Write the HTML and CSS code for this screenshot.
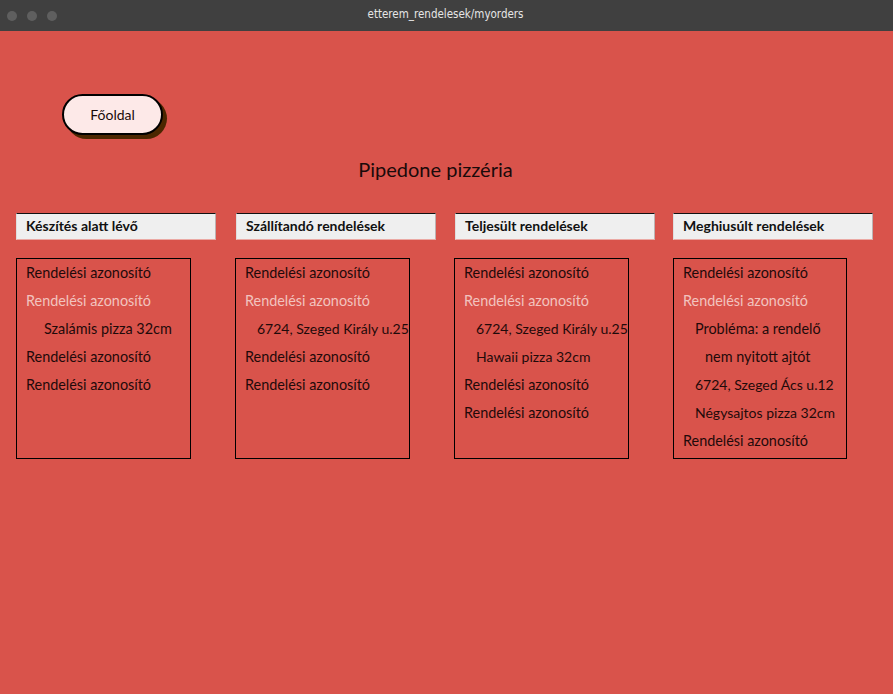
FILE: index.html
```html
<!DOCTYPE html>
<html lang="hu">
<head>
<meta charset="utf-8">
<title>etterem_rendelesek/myorders</title>
<link rel="stylesheet" href="styles.css">
</head>
<body>
<div class="titlebar">
  <div class="dots"><span class="dot"></span><span class="dot"></span><span class="dot"></span></div>
  <div class="title">etterem_rendelesek/myorders</div>
</div>
<main class="page">
  <div class="nav"><button class="home-btn">Főoldal</button></div>
  <h1 class="heading">Pipedone pizzéria</h1>
  <div class="columns">
    <section class="col">
      <div class="col-head">Készítés alatt lévő</div>
      <ul class="orders">
        <li>Rendelési azonosító</li>
        <li class="active">Rendelési azonosító</li>
        <li class="sub sub-wide">Szalámis pizza 32cm</li>
        <li>Rendelési azonosító</li>
        <li>Rendelési azonosító</li>
      </ul>
    </section>
    <section class="col">
      <div class="col-head">Szállítandó rendelések</div>
      <ul class="orders">
        <li>Rendelési azonosító</li>
        <li class="active">Rendelési azonosító</li>
        <li class="sub">6724, Szeged Király u.25</li>
        <li>Rendelési azonosító</li>
        <li>Rendelési azonosító</li>
      </ul>
    </section>
    <section class="col">
      <div class="col-head">Teljesült rendelések</div>
      <ul class="orders">
        <li>Rendelési azonosító</li>
        <li class="active">Rendelési azonosító</li>
        <li class="sub">6724, Szeged Király u.25</li>
        <li class="sub">Hawaii pizza 32cm</li>
        <li>Rendelési azonosító</li>
        <li>Rendelési azonosító</li>
      </ul>
    </section>
    <section class="col">
      <div class="col-head">Meghiusúlt rendelések</div>
      <ul class="orders">
        <li>Rendelési azonosító</li>
        <li class="active">Rendelési azonosító</li>
        <li class="sub problem">Probléma: a rendelő<br>nem nyitott ajtót</li>
        <li class="sub">6724, Szeged Ács u.12</li>
        <li class="sub">Négysajtos pizza 32cm</li>
        <li>Rendelési azonosító</li>
      </ul>
    </section>
  </div>
</main>
</body>
</html>
```

FILE: styles.css
```css
* { box-sizing: border-box; }
html, body { margin: 0; padding: 0; }
body {
  background: #d9534b;
  font-family: "Lato", "Noto Sans", sans-serif;
  color: #1a0a0a;
  height: 694px;
  overflow: hidden;
}
.titlebar {
  height: 31px;
  background: #404040;
  display: flex;
  align-items: center;
  position: relative;
}
.dots {
  display: flex;
  gap: 10px;
  padding-left: 7px;
  padding-top: 1px;
}
.dot {
  width: 10px;
  height: 10px;
  border-radius: 50%;
  background: #5f5f5f;
}
.title {
  position: absolute;
  left: 0;
  right: 0;
  top: 0;
  line-height: 29px;
  text-align: center;
  color: #e6e6e6;
  font-family: "DejaVu Sans Condensed", "DejaVu Sans", sans-serif;
  font-stretch: condensed;
  font-size: 11.5px;
  padding-right: 2px;
}
.page { padding: 63px 0 0 0; }
.nav { padding-left: 62px; height: 45px; }
.home-btn {
  width: 101px;
  height: 41px;
  border: 2px solid #000;
  border-radius: 21px;
  background: #fde9e8;
  box-shadow: 4px 4px 0 #4b2600;
  font-family: inherit;
  font-size: 14px;
  color: #1a0a0a;
  padding: 0;
  cursor: pointer;
}
.heading {
  margin: 15px 0 0;
  font-size: 20px;
  font-weight: 400;
  text-align: center;
  padding-right: 22px;
  line-height: 30px;
  color: #1a0a0a;
}
.columns {
  display: grid;
  grid-template-columns: 220px 219px 218px 219px;
  padding-left: 16px;
  margin-top: 29px;
}
.col-head {
  width: 200px;
  height: 27px;
  background: #efefef;
  border-top: 1px solid #111;
  border-left: 1px solid #dedede;
  border-right: 1px solid #bdb3b3;
  border-bottom: 1px solid #eba9a4;
  font-weight: 700;
  font-size: 14px;
  line-height: 24px;
  padding-left: 9px;
  color: #111;
}
.orders {
  list-style: none;
  margin: 18px 0 0;
  padding: 0 0 0 9px;
  width: 175px;
  height: 201px;
  border: 1px solid #000;
  font-size: 14.4px;
  line-height: 28px;
  white-space: nowrap;
}
.col:nth-child(2) .orders { margin-left: -1px; }
.col:nth-child(3) .orders { margin-left: -1px; }
.col:nth-child(4) .orders { width: 174px; }
.orders li { color: #1f0a0a; }
.orders li.active { color: #f2c3bf; }
.orders li.sub { padding-left: 12px; font-size: 14px; }
.orders li.sub-wide { padding-left: 18px; font-size: 14.4px; }
.orders li.problem {
  display: inline-block;
  text-align: center;
  white-space: normal;
  font-size: 14.4px;
}
```
